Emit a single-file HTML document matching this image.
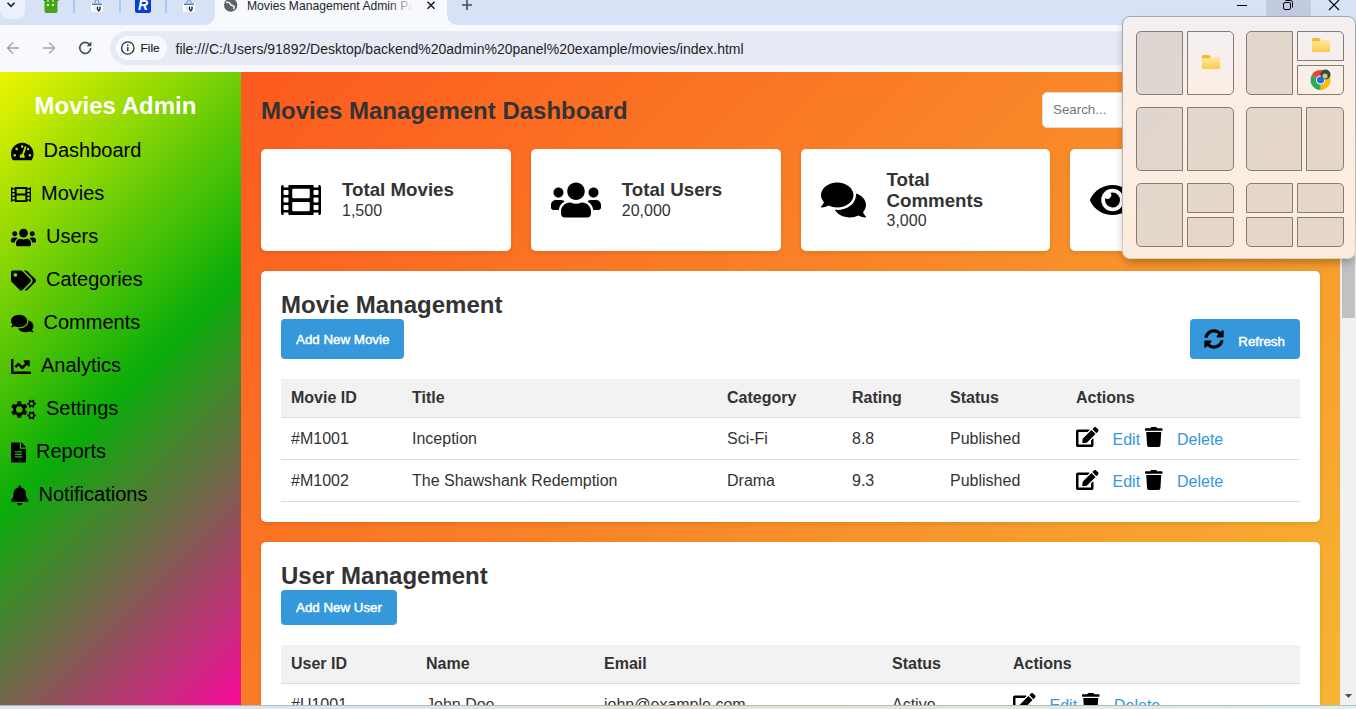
<!DOCTYPE html>
<html lang="en"><head><meta charset="utf-8"><title>Movies Management Admin Panel</title>
<style>
*{box-sizing:border-box;margin:0;padding:0}
html,body{width:1356px;height:709px;overflow:hidden;background:#f9f9ff;font-family:"Liberation Sans",Arial,sans-serif;color:#333}
.ic{fill:currentColor;display:inline-block;vertical-align:middle;flex:none}
#chrome{position:absolute;left:0;top:0;width:1356px;height:72px;background:#f8f9ff;z-index:5}
#tabstrip{position:absolute;left:0;top:0;width:1356px;height:25px;background:#d7e2f7}
#tabsearch{position:absolute;left:0;top:-10px;width:25px;height:29px;background:#eaf0fc;border-radius:8px}
#tabgroup{position:absolute;left:25px;top:-10px;width:190px;height:35px;background:#d7e2f7}
#activetab{position:absolute;left:215px;top:-10px;width:232px;height:35px;background:#f8f9ff;border-radius:8px 8px 0 0}
#activetab:before,#activetab:after{content:"";position:absolute;bottom:0;width:10px;height:10px;background:radial-gradient(circle at 0 0,transparent 9.5px,#f8f9ff 10px)}
#activetab:before{left:-10px}
#activetab:after{right:-10px;background:radial-gradient(circle at 100% 0,transparent 9.5px,#f8f9ff 10px)}
.tabtitle{position:absolute;left:247px;top:-2px;width:166px;height:16px;overflow:hidden;white-space:nowrap;font-size:12.15px;color:#1f1f1f;line-height:16px}
.tabtitle:after{content:"";position:absolute;right:0;top:0;width:24px;height:16px;background:linear-gradient(90deg,rgba(248,249,255,0),#f8f9ff)}
#omni{position:absolute;left:110px;top:31px;width:1100px;height:34px;border-radius:17px;background:#e6eaf5}
#filechip{position:absolute;left:116px;top:36px;width:51px;height:24px;border-radius:12px;background:#f8f9ff}
.url{position:absolute;left:175.5px;top:40.5px;font-size:14px;line-height:16px;color:#1f1f1f;white-space:nowrap}
.filetxt{position:absolute;left:140.6px;top:40px;font-size:11.8px;line-height:16px;color:#1f1f1f;-webkit-text-stroke:.2px #1f1f1f}
#page{position:absolute;left:0;top:72px;width:1356px;height:633px;overflow:hidden;background:#f6b532}
#bottom{position:absolute;left:0;top:705px;width:1356px;height:4px;background:linear-gradient(180deg,rgba(60,70,70,.28) 0,rgba(60,70,70,.28) 1px,transparent 1px),linear-gradient(90deg,#dbe5f3 0%,#dde6ee 25%,#e6e4da 50%,#e2e8e2 75%,#e0eeee 100%)}
#side{position:absolute;left:0;top:0;width:241px;height:633px;overflow:hidden}
#side:before{content:"";position:absolute;left:0;top:0;width:250px;height:633px;background:linear-gradient(135deg,#eef600 0%,#09ad09 50%,#ff069f 100%)}
#side h2{position:absolute;left:0;top:20px;width:231px;text-align:center;color:#fff;font-size:24px;line-height:28px;font-weight:bold}
#side ul{position:absolute;left:11px;top:57.3px;list-style:none}
#side li{height:43px;display:flex;align-items:center;font-size:20px;color:#000;white-space:nowrap}
#side li .ic{margin-right:10px;fill:#000}
#main{position:absolute;left:241px;top:0;width:1099px;height:633px;background:linear-gradient(135deg,#fc5a1e,#f6b532)}
h1{position:absolute;left:20px;top:24.6px;font-size:24px;line-height:28px;font-weight:bold;color:#333}
#search{position:absolute;left:801px;top:20px;width:300px;height:36.4px;background:#fff;border:1px solid #ddd;border-radius:5px;font-size:13.33px;line-height:34.4px;padding-left:10px;color:#757575}
#stats{position:absolute;left:20px;top:77px;display:flex;gap:20px}
.stat{width:249.75px;height:102px;flex:none;background:#fff;border-radius:5px;box-shadow:0 2px 5px rgba(0,0,0,.1);display:flex;align-items:center;padding:20px;color:#000}
.stat .ic{margin-right:21px}
.stat h3{font-size:18.72px;line-height:21.5px;font-weight:bold;color:#333;position:relative;top:-.7px}
.stat p{font-size:16px;line-height:18.4px;color:#333}
.card{position:absolute;left:20px;width:1059px;background:#fff;border-radius:5px;box-shadow:0 2px 5px rgba(0,0,0,.1);padding:20px}
.card h2{font-size:24px;line-height:28px;font-weight:bold;color:#333;margin-bottom:0}
.btn{white-space:nowrap;display:inline-flex;align-items:center;background:#3498db;color:#fff;font-size:13.33px;border-radius:4px;height:40px;padding:0 15px;-webkit-text-stroke:.45px #fff}
table{border-collapse:collapse;width:1019px;position:absolute;left:20px}
th{background:#f2f2f2;font-weight:bold;text-align:left}
th,td{padding:0 10px;font-size:16px;color:#333;border-bottom:1px solid #ddd;height:42.2px;white-space:nowrap}
th{height:38.4px}
td a{color:#3498db;position:relative;top:2px}
td .ic{position:relative;top:-1px}
.r1 td{padding-top:1px}
.r1 td .ic{top:-1.5px}
td .ic{fill:#000}
#sb{position:absolute;left:1340px;top:0;width:16px;height:633px;background:#f1f1f1}
#sb .thumb{position:absolute;left:2px;top:17px;width:12.7px;height:228.7px;background:#c1c1c1}
#sb .dn{position:absolute;left:4.7px;top:621.8px;width:7.6px;height:4.3px;background:#505050;clip-path:polygon(0 0,100% 0,50% 100%)}
#snap{position:absolute;left:1124px;top:18px;width:229px;height:240px;border-radius:8px;background:linear-gradient(180deg,#fbf1e8,#fdeadb);box-shadow:0 0 0 1px rgba(120,90,60,.25),0 6px 14px rgba(0,0,0,.22);z-index:10}
#snap i{position:absolute;border:1px solid #8a8079;background:#e9dacb;display:block}
#snap i.l{background:#fbeadb}
.wc{position:absolute;top:0;height:12px}
</style></head><body>
<div id="chrome">
 <div id="tabstrip">
  <div id="tabsearch"></div>
  <div id="activetab"></div>
  <div class="tabtitle">Movies Management Admin Panel</div>
 </div>
 <div id="omni"></div><div id="filechip"></div>
 <div class="filetxt">File</div>
 <div class="url">file:///C:/Users/91892/Desktop/backend%20admin%20panel%20example/movies/index.html</div>
 <svg width="1356" height="72" viewBox="0 0 1356 72" style="position:absolute;left:0;top:0"><path d="M7.5 2.8L11 6.3L14.5 2.8" fill="none" stroke="#1f1f1f" stroke-width="1.6"/><rect x="44.5" y="-4" width="13" height="17" rx="2" fill="#45a516"/><rect x="43.5" y="-3" width="15" height="4" fill="#3f9813"/><rect x="47" y="4" width="2" height="2" fill="#e8f5e0"/><rect x="52" y="4" width="2" height="2" fill="#e8f5e0"/><rect x="47" y="0" width="2" height="2" fill="#9fd48a"/><rect x="52" y="0" width="2" height="2" fill="#9fd48a"/><rect x="73" y="0" width="2" height="13" fill="#a8c7fa"/><rect x="119" y="0" width="2" height="13" fill="#a8c7fa"/><rect x="165" y="0" width="2" height="13" fill="#a8c7fa"/><rect x="91" y="3" width="12" height="8.5" fill="#fff"/><rect x="92" y="3.5" width="10" height="1.5" fill="#2b7de9"/><path d="M94.6 3L96.2 0M99.4 3L97.8 0" fill="none" stroke="#7a7f87" stroke-width="1"/><path d="M97.5 6.5V9.5L98.8 10.8L100 9.5V6.5" fill="none" stroke="#222" stroke-width="1.4"/><rect x="94" y="6.5" width="1.5" height="3.5" fill="#ddd"/><rect x="183" y="3" width="12" height="8.5" fill="#fff"/><rect x="184" y="3.5" width="10" height="1.5" fill="#2b7de9"/><path d="M186.6 3L188.2 0M191.4 3L189.8 0" fill="none" stroke="#7a7f87" stroke-width="1"/><path d="M189.5 6.5V9.5L190.8 10.8L192 9.5V6.5" fill="none" stroke="#222" stroke-width="1.4"/><rect x="186" y="6.5" width="1.5" height="3.5" fill="#ddd"/><rect x="135" y="-4" width="16" height="17" rx="2" fill="#0b3fd1"/><text x="138" y="9.5" font-family="Liberation Sans,Arial,sans-serif" font-weight="bold" font-style="italic" font-size="14" fill="#fff">R</text><circle cx="230.7" cy="5" r="6.7" fill="#5f6368"/><path d="M226 2.5Q229 1.5 230 3.5Q230.5 5.5 233 5.8Q235 6.5 233.5 9" fill="none" stroke="#f8f9ff" stroke-width="1.5"/><path d="M427.5 1.7L434.5 8.7M434.5 1.7L427.5 8.7" stroke="#1f1f1f" stroke-width="1.6"/><path d="M462 5H472M467 0V10" stroke="#444a57" stroke-width="1.5"/><path d="M19 48H8M13 42.5L7.5 48L13 53.5" fill="none" stroke="#a0a3a9" stroke-width="1.4"/><path d="M43 48H54M49 42.5L54.5 48L49 53.5" fill="none" stroke="#a0a3a9" stroke-width="1.4"/><path d="M89.6 44.6A5.5 5.5 0 1 0 90.7 48" fill="none" stroke="#454a54" stroke-width="1.6"/><path d="M91.3 41.6V46.2H86.7Z" fill="#454a54"/><circle cx="127.8" cy="48" r="6.2" fill="none" stroke="#2a2a2a" stroke-width="1.3"/><rect x="127.1" y="47" width="1.4" height="4.3" fill="#2a2a2a"/><rect x="127.1" y="44.5" width="1.4" height="1.5" fill="#2a2a2a"/></svg>
</div>
<div id="page">
 <div id="side"><h2>Movies Admin</h2><ul>
<li><svg class="ic " width="22.5" height="20" viewBox="0 -14 576 512" style=";overflow:visible"><path fill-rule="evenodd" d="M288 32C128.940 32 0 160.940 0 320c0 52.800 14.250 102.260 39.060 144.800 5.610 9.620 16.300 15.200 27.440 15.200h443c11.140 0 21.830-5.580 27.440-15.200C561.750 422.260 576 372.800 576 320c0-159.060-128.940-288-288-288zm0 64c14.710 0 26.580 10.130 30.320 23.650-1.110 2.260-2.640 4.230-3.450 6.670l-9.220 27.670c-5.130 3.490-10.970 6.010-17.640 6.010-17.670 0-32-14.330-32-32S270.330 96 288 96zM96 384c-17.670 0-32-14.330-32-32s14.330-32 32-32 32 14.330 32 32-14.330 32-32 32zm48-160c-17.670 0-32-14.330-32-32s14.330-32 32-32 32 14.330 32 32-14.330 32-32 32zm246.770-72.410l-61.330 184C343.130 347.330 352 364.540 352 384c0 11.720-3.380 22.550-8.880 32H232.880c-5.500-9.450-8.880-20.280-8.880-32 0-33.940 26.500-61.430 59.900-63.590l61.340-184.010c4.170-12.560 17.730-19.450 30.360-15.170 12.570 4.190 19.350 17.790 15.170 30.360zm14.660 57.200l15.520-46.550c3.470-1.290 7.130-2.230 11.050-2.230 17.670 0 32 14.330 32 32s-14.330 32-32 32c-11.380-.010-20.890-6.280-26.570-15.220zM480 384c-17.670 0-32-14.330-32-32s14.330-32 32-32 32 14.330 32 32-14.330 32-32 32z"/></svg><span>Dashboard</span></li>
<li><svg class="ic " width="20" height="20" viewBox="0 -14 512 512" style=";overflow:visible"><path fill-rule="evenodd" d="M488 64h-8v20c0 6.600-5.400 12-12 12h-40c-6.600 0-12-5.400-12-12V64H96v20c0 6.600-5.400 12-12 12H44c-6.600 0-12-5.400-12-12V64h-8C10.700 64 0 74.700 0 88v336c0 13.300 10.700 24 24 24h8v-20c0-6.600 5.400-12 12-12h40c6.600 0 12 5.400 12 12v20h320v-20c0-6.600 5.400-12 12-12h40c6.600 0 12 5.400 12 12v20h8c13.300 0 24-10.700 24-24V88c0-13.300-10.700-24-24-24zM96 372c0 6.600-5.400 12-12 12H44c-6.600 0-12-5.400-12-12v-40c0-6.600 5.400-12 12-12h40c6.600 0 12 5.400 12 12v40zm0-96c0 6.600-5.400 12-12 12H44c-6.600 0-12-5.400-12-12v-40c0-6.600 5.400-12 12-12h40c6.600 0 12 5.400 12 12v40zm0-96c0 6.600-5.400 12-12 12H44c-6.600 0-12-5.400-12-12v-40c0-6.600 5.400-12 12-12h40c6.600 0 12 5.400 12 12v40zm272 208c0 6.600-5.400 12-12 12H156c-6.600 0-12-5.400-12-12v-96c0-6.600 5.400-12 12-12h200c6.600 0 12 5.400 12 12v96zm0-168c0 6.600-5.400 12-12 12H156c-6.600 0-12-5.400-12-12v-96c0-6.600 5.400-12 12-12h200c6.600 0 12 5.400 12 12v96zm112 152c0 6.600-5.400 12-12 12h-40c-6.600 0-12-5.400-12-12v-40c0-6.600 5.400-12 12-12h40c6.600 0 12 5.400 12 12v40zm0-96c0 6.600-5.400 12-12 12h-40c-6.600 0-12-5.400-12-12v-40c0-6.600 5.400-12 12-12h40c6.600 0 12 5.400 12 12v40zm0-96c0 6.600-5.400 12-12 12h-40c-6.600 0-12-5.400-12-12v-40c0-6.600 5.400-12 12-12h40c6.600 0 12 5.400 12 12v40z"/></svg><span>Movies</span></li>
<li><svg class="ic " width="25" height="20" viewBox="0 -14 640 512" style=";overflow:visible"><path fill-rule="evenodd" d="M96 224c35.300 0 64-28.700 64-64s-28.700-64-64-64-64 28.700-64 64 28.700 64 64 64zm448 0c35.300 0 64-28.700 64-64s-28.700-64-64-64-64 28.700-64 64 28.700 64 64 64zm32 32h-64c-17.600 0-33.500 7.100-45.100 18.600 40.300 22.100 68.900 62 75.100 109.400h66c17.700 0 32-14.300 32-32v-32c0-35.300-28.700-64-64-64zm-256 0c61.900 0 112-50.100 112-112S381.900 32 320 32 208 82.100 208 144s50.100 112 112 112zm76.800 32h-8.300c-20.800 10-43.900 16-68.500 16s-47.600-6-68.500-16h-8.300C179.600 288 128 339.600 128 403.200V432c0 26.500 21.500 48 48 48h288c26.500 0 48-21.500 48-48v-28.800c0-63.600-51.600-115.200-115.200-115.200zm-223.700-13.400C161.500 263.100 145.600 256 128 256H64c-35.300 0-64 28.700-64 64v32c0 17.700 14.300 32 32 32h65.900c6.300-47.400 34.900-87.300 75.200-109.400z"/></svg><span>Users</span></li>
<li><svg class="ic " width="25" height="20" viewBox="0 -14 640 512" style=";overflow:visible"><path fill-rule="evenodd" d="M497.941 225.941L286.059 14.059A48 48 0 0 0 252.118 0H48C21.490 0 0 21.490 0 48v204.118a48 48 0 0 0 14.059 33.941l211.882 211.882c18.744 18.745 49.136 18.746 67.882 0l204.118-204.118c18.745-18.745 18.745-49.137 0-67.882zM112 160c-26.510 0-48-21.490-48-48s21.490-48 48-48 48 21.490 48 48-21.490 48-48 48zm513.941 133.823L421.823 497.941c-18.745 18.745-49.137 18.745-67.882 0l-.36-.36L527.640 323.522c16.999-16.999 26.360-39.600 26.360-63.640s-9.362-46.641-26.360-63.640L331.397 0h48.721a48 48 0 0 1 33.941 14.059l211.882 211.882c18.745 18.745 18.745 49.137 0 67.882z"/></svg><span>Categories</span></li>
<li><svg class="ic " width="22.5" height="20" viewBox="0 -14 576 512" style=";overflow:visible"><path fill-rule="evenodd" d="M416 192c0-88.400-93.100-160-208-160S0 103.600 0 192c0 34.300 14.100 65.900 38 92-13.400 30.200-35.500 54.200-35.800 54.500-2.200 2.300-2.800 5.700-1.500 8.700S4.800 352 8 352c36.600 0 66.900-12.300 88.700-25 32.200 15.700 70.300 25 111.300 25 114.900 0 208-71.600 208-160zm122 220c23.900-26 38-57.700 38-92 0-66.900-53.500-124.200-129.300-148.100.9 6.600 1.300 13.300 1.300 20.100 0 105.900-107.700 192-240 192-10.800 0-21.300-.8-31.700-1.900C207.800 439.600 281.800 480 368 480c41 0 79.100-9.200 111.300-25 21.800 12.700 52.100 25 88.700 25 3.200 0 6.100-1.900 7.300-4.800 1.300-2.900.7-6.300-1.500-8.700-.3-.3-22.400-24.200-35.800-54.500z"/></svg><span>Comments</span></li>
<li><svg class="ic " width="20" height="20" viewBox="0 -14 512 512" style=";overflow:visible"><path fill-rule="evenodd" d="M496 384H64V80c0-8.840-7.160-16-16-16H16C7.160 64 0 71.160 0 80v336c0 17.670 14.330 32 32 32h464c8.840 0 16-7.160 16-16v-32c0-8.840-7.160-16-16-16zM464 96H345.940c-21.380 0-32.090 25.850-16.970 40.970l32.400 32.400L288 242.750l-73.370-73.370c-12.500-12.500-32.760-12.500-45.250 0l-68.690 68.690c-6.250 6.250-6.250 16.380 0 22.630l22.620 22.620c6.250 6.250 16.380 6.250 22.630 0L192 237.250l73.370 73.370c12.500 12.500 32.760 12.500 45.250 0l96-96 32.400 32.400c15.120 15.120 40.970 4.410 40.970-16.970V112c.01-8.840-7.150-16-15.990-16z"/></svg><span>Analytics</span></li>
<li><svg class="ic " width="25" height="20" viewBox="0 -14 640 512" style=";overflow:visible"><path fill-rule="evenodd" d="M263.0 104.4L258.9 46.2L165.1 46.2L161.0 104.4L106.2 136.0L53.7 110.5L6.8 191.7L55.2 224.4L55.2 287.6L6.8 320.3L53.7 401.5L106.2 376.0L161.0 407.6L165.1 465.8L258.9 465.8L263.0 407.6L317.8 376.0L370.3 401.5L417.2 320.3L368.8 287.6L368.8 224.4L417.2 191.7L370.3 110.5L317.8 136.0ZM296 256A84 84 0 1 0 128 256A84 84 0 1 0 296 256ZM602.8 131.5L636.3 130.4L636.3 81.6L602.8 80.5L587.0 53.1L602.8 23.6L560.5 -0.9L542.8 27.6L511.2 27.6L493.5 -0.9L451.2 23.6L467.0 53.1L451.2 80.5L417.7 81.6L417.7 130.4L451.2 131.5L467.0 158.9L451.2 188.4L493.5 212.9L511.2 184.4L542.8 184.4L560.5 212.9L602.8 188.4L587.0 158.9ZM569 106A42 42 0 1 0 485 106A42 42 0 1 0 569 106ZM602.8 431.5L636.3 430.4L636.3 381.6L602.8 380.5L587.0 353.1L602.8 323.6L560.5 299.1L542.8 327.6L511.2 327.6L493.5 299.1L451.2 323.6L467.0 353.1L451.2 380.5L417.7 381.6L417.7 430.4L451.2 431.5L467.0 458.9L451.2 488.4L493.5 512.9L511.2 484.4L542.8 484.4L560.5 512.9L602.8 488.4L587.0 458.9ZM569 406A42 42 0 1 0 485 406A42 42 0 1 0 569 406Z"/></svg><span>Settings</span></li>
<li><svg class="ic " width="15" height="20" viewBox="0 -14 384 512" style=";overflow:visible"><path fill-rule="evenodd" d="M224 136V0H24C10.700 0 0 10.700 0 24v464c0 13.300 10.700 24 24 24h336c13.300 0 24-10.700 24-24V160H248c-13.200 0-24-10.800-24-24zm64 236c0 6.600-5.400 12-12 12H108c-6.600 0-12-5.400-12-12v-8c0-6.600 5.400-12 12-12h168c6.600 0 12 5.400 12 12v8zm0-64c0 6.600-5.400 12-12 12H108c-6.600 0-12-5.400-12-12v-8c0-6.600 5.400-12 12-12h168c6.600 0 12 5.400 12 12v8zm0-72v8c0 6.600-5.400 12-12 12H108c-6.600 0-12-5.400-12-12v-8c0-6.600 5.400-12 12-12h168c6.600 0 12 5.400 12 12zm96-114.100v6.100H256V0h6.100c6.400 0 12.500 2.500 17 7l97.900 98c4.500 4.500 7 10.600 7 16.900z"/></svg><span>Reports</span></li>
<li><svg class="ic " width="17.5" height="20" viewBox="0 -14 448 512" style=";overflow:visible"><path fill-rule="evenodd" d="M224 512c35.320 0 63.970-28.650 63.970-64H160.030c0 35.350 28.650 64 63.970 64zm215.390-149.710c-19.320-20.760-55.470-51.990-55.470-154.290 0-77.700-54.480-139.900-127.940-155.160V32c0-17.670-14.320-32-31.980-32s-31.980 14.330-31.980 32v20.840C118.560 68.100 64.080 130.300 64.080 208c0 102.300-36.150 133.530-55.470 154.290-6 6.450-8.660 14.160-8.610 21.710.11 16.400 12.980 32 32.100 32h383.800c19.120 0 32-15.600 32.100-32 .05-7.550-2.610-15.270-8.610-21.710z"/></svg><span>Notifications</span></li>
</ul></div>
 <div id="main">
  <h1>Movies Management Dashboard</h1>
  <div id="search">Search...</div>
  <div id="stats"><div class="stat" ><svg class="ic " width="40" height="40" viewBox="0 0 512 512" style=";overflow:visible"><path fill-rule="evenodd" d="M488 64h-8v20c0 6.600-5.400 12-12 12h-40c-6.600 0-12-5.400-12-12V64H96v20c0 6.600-5.400 12-12 12H44c-6.600 0-12-5.400-12-12V64h-8C10.700 64 0 74.700 0 88v336c0 13.300 10.700 24 24 24h8v-20c0-6.600 5.400-12 12-12h40c6.600 0 12 5.400 12 12v20h320v-20c0-6.600 5.400-12 12-12h40c6.600 0 12 5.400 12 12v20h8c13.300 0 24-10.700 24-24V88c0-13.300-10.700-24-24-24zM96 372c0 6.600-5.400 12-12 12H44c-6.600 0-12-5.400-12-12v-40c0-6.600 5.400-12 12-12h40c6.600 0 12 5.400 12 12v40zm0-96c0 6.600-5.400 12-12 12H44c-6.600 0-12-5.400-12-12v-40c0-6.600 5.400-12 12-12h40c6.600 0 12 5.400 12 12v40zm0-96c0 6.600-5.400 12-12 12H44c-6.600 0-12-5.400-12-12v-40c0-6.600 5.400-12 12-12h40c6.600 0 12 5.400 12 12v40zm272 208c0 6.600-5.400 12-12 12H156c-6.600 0-12-5.400-12-12v-96c0-6.600 5.400-12 12-12h200c6.600 0 12 5.400 12 12v96zm0-168c0 6.600-5.400 12-12 12H156c-6.600 0-12-5.400-12-12v-96c0-6.600 5.400-12 12-12h200c6.600 0 12 5.400 12 12v96zm112 152c0 6.600-5.400 12-12 12h-40c-6.600 0-12-5.400-12-12v-40c0-6.600 5.400-12 12-12h40c6.600 0 12 5.400 12 12v40zm0-96c0 6.600-5.400 12-12 12h-40c-6.600 0-12-5.400-12-12v-40c0-6.600 5.400-12 12-12h40c6.600 0 12 5.400 12 12v40zm0-96c0 6.600-5.400 12-12 12h-40c-6.600 0-12-5.400-12-12v-40c0-6.600 5.400-12 12-12h40c6.600 0 12 5.400 12 12v40z"/></svg><div class="st"><h3>Total Movies</h3><p>1,500</p></div></div><div class="stat" ><svg class="ic " width="50" height="40" viewBox="0 0 640 512" style=";overflow:visible"><path fill-rule="evenodd" d="M96 224c35.300 0 64-28.700 64-64s-28.700-64-64-64-64 28.700-64 64 28.700 64 64 64zm448 0c35.300 0 64-28.700 64-64s-28.700-64-64-64-64 28.700-64 64 28.700 64 64 64zm32 32h-64c-17.600 0-33.500 7.100-45.100 18.600 40.300 22.100 68.900 62 75.100 109.400h66c17.700 0 32-14.300 32-32v-32c0-35.300-28.700-64-64-64zm-256 0c61.900 0 112-50.100 112-112S381.900 32 320 32 208 82.100 208 144s50.100 112 112 112zm76.800 32h-8.300c-20.800 10-43.900 16-68.500 16s-47.600-6-68.500-16h-8.300C179.600 288 128 339.600 128 403.200V432c0 26.500 21.500 48 48 48h288c26.500 0 48-21.500 48-48v-28.800c0-63.600-51.600-115.200-115.200-115.200zm-223.700-13.400C161.500 263.100 145.600 256 128 256H64c-35.300 0-64 28.700-64 64v32c0 17.700 14.300 32 32 32h65.900c6.300-47.400 34.900-87.300 75.200-109.400z"/></svg><div class="st"><h3>Total Users</h3><p>20,000</p></div></div><div class="stat" ><svg class="ic " width="45" height="40" viewBox="0 0 576 512" style=";overflow:visible"><path fill-rule="evenodd" d="M416 192c0-88.400-93.100-160-208-160S0 103.600 0 192c0 34.300 14.100 65.900 38 92-13.400 30.200-35.500 54.200-35.800 54.500-2.200 2.300-2.800 5.700-1.500 8.700S4.800 352 8 352c36.600 0 66.900-12.300 88.700-25 32.200 15.700 70.300 25 111.300 25 114.900 0 208-71.600 208-160zm122 220c23.900-26 38-57.700 38-92 0-66.900-53.500-124.200-129.300-148.100.9 6.600 1.300 13.300 1.300 20.100 0 105.900-107.700 192-240 192-10.800 0-21.300-.8-31.700-1.900C207.800 439.600 281.800 480 368 480c41 0 79.100-9.200 111.300-25 21.800 12.700 52.100 25 88.700 25 3.200 0 6.100-1.900 7.300-4.800 1.300-2.900.7-6.300-1.500-8.700-.3-.3-22.400-24.200-35.800-54.500z"/></svg><div class="st"><h3>Total<br>Comments</h3><p>3,000</p></div></div><div class="stat" ><svg class="ic " width="45" height="40" viewBox="0 0 576 512" style=";overflow:visible"><path fill-rule="evenodd" d="M572.520 241.400C518.290 135.590 410.930 64 288 64S57.680 135.640 3.480 241.410a32.350 32.350 0 0 0 0 29.190C57.710 376.410 165.070 448 288 448s230.320-71.640 284.520-177.410a32.350 32.350 0 0 0 0-29.190zM288 400a144 144 0 1 1 144-144 143.930 143.930 0 0 1-144 144zm0-240a95.310 95.310 0 0 0-25.310 3.790 47.850 47.850 0 0 1-66.900 66.900A95.780 95.780 0 1 0 288 160z"/></svg><div class="st"><h3>Total Views</h3><p>1,200,000</p></div></div></div>
  <div class="card" style="top:199px;height:251px">
   <h2>Movie Management</h2>
   <div class="btn" style="position:absolute;left:20px;top:48px;width:123px">Add New Movie</div>
   <div class="btn" style="position:absolute;left:929px;top:48px;width:110px;padding-left:14.4px"><svg class="ic " width="20" height="20" viewBox="0 0 512 512" style="fill:#000;position:relative;top:-.4px;overflow:visible"><path fill-rule="evenodd" d="M370.720 133.280C339.458 104.008 298.888 87.962 255.848 88c-77.458.068-144.328 53.178-162.791 126.850-1.344 5.363-6.122 9.150-11.651 9.150H24.103c-7.498 0-13.194-6.807-11.807-14.176C33.933 94.924 134.813 8 256 8c66.448 0 126.791 26.136 171.315 68.685L463.030 40.970C478.149 25.851 504 36.559 504 57.941V192c0 13.255-10.745 24-24 24H345.941c-21.382 0-32.090-25.851-16.971-40.971l41.750-41.749zM32 296h134.059c21.382 0 32.090 25.851 16.971 40.971l-41.750 41.750c31.262 29.273 71.835 45.319 114.876 45.280 77.418-.07 144.315-53.144 162.787-126.849 1.344-5.363 6.122-9.150 11.651-9.150h57.304c7.498 0 13.194 6.807 11.807 14.176C478.067 417.076 377.187 504 256 504c-66.448 0-126.791-26.136-171.315-68.685L48.970 471.030C33.851 486.149 8 475.441 8 454.059V320c0-13.255 10.745-24 24-24z"/></svg><span style="margin-left:13.9px;position:relative;top:2.5px">Refresh</span></div>
   <table style="top:108px"><tr><th style="width:121px">Movie ID</th><th style="width:315px">Title</th><th style="width:125px">Category</th><th style="width:98px">Rating</th><th style="width:126px">Status</th><th>Actions</th></tr>
   <tr class="r1"><td>#M1001</td><td>Inception</td><td>Sci-Fi</td><td>8.8</td><td>Published</td><td class="act"><svg class="ic " width="22.5" height="20" viewBox="0 0 576 512" style=";overflow:visible"><path fill-rule="evenodd" d="M402.600 83.200l90.200 90.200c3.800 3.800 3.800 10 0 13.800L274.400 405.600l-92.800 10.300c-12.400 1.400-22.900-9.100-21.500-21.500l10.300-92.800L388.800 83.200c3.800-3.800 10-3.800 13.800 0zm162-22.900l-48.800-48.800c-15.200-15.200-39.900-15.200-55.200 0l-35.400 35.400c-3.800 3.800-3.800 10 0 13.800l90.200 90.200c3.800 3.800 10 3.800 13.800 0l35.400-35.400c15.200-15.300 15.200-40 0-55.200zM384 346.200V448H64V128h229.800c3.200 0 6.200-1.300 8.500-3.500l40-40c7.600-7.600 2.200-20.500-8.500-20.500H48C21.500 64 0 85.500 0 112v352c0 26.500 21.500 48 48 48h352c26.500 0 48-21.500 48-48V306.200c0-10.700-12.900-16-20.500-8.500l-40 40c-2.200 2.300-3.500 5.300-3.500 8.500z"/></svg><a style="margin-left:14px">Edit</a><svg class="ic " width="17.5" height="20" viewBox="0 0 448 512" style="margin-left:5px;overflow:visible"><path fill-rule="evenodd" d="M432 32H312l-9.400-18.700A24 24 0 0 0 281.100 0H166.800a23.720 23.720 0 0 0-21.400 13.300L136 32H16A16 16 0 0 0 0 48v32a16 16 0 0 0 16 16h416a16 16 0 0 0 16-16V48a16 16 0 0 0-16-16zM53.200 467a48 48 0 0 0 47.900 45h245.800a48 48 0 0 0 47.900-45L416 128H32z"/></svg><a style="margin-left:14.4px">Delete</a></td></tr>
   <tr><td>#M1002</td><td>The Shawshank Redemption</td><td>Drama</td><td>9.3</td><td>Published</td><td class="act"><svg class="ic " width="22.5" height="20" viewBox="0 0 576 512" style=";overflow:visible"><path fill-rule="evenodd" d="M402.600 83.200l90.200 90.200c3.800 3.800 3.800 10 0 13.800L274.400 405.600l-92.800 10.300c-12.400 1.400-22.900-9.100-21.500-21.500l10.300-92.800L388.800 83.200c3.800-3.800 10-3.800 13.800 0zm162-22.900l-48.800-48.800c-15.200-15.200-39.900-15.200-55.200 0l-35.400 35.400c-3.800 3.800-3.800 10 0 13.800l90.200 90.200c3.800 3.800 10 3.800 13.800 0l35.400-35.400c15.200-15.300 15.200-40 0-55.200zM384 346.200V448H64V128h229.800c3.200 0 6.200-1.300 8.500-3.500l40-40c7.600-7.600 2.200-20.500-8.500-20.500H48C21.500 64 0 85.500 0 112v352c0 26.500 21.500 48 48 48h352c26.500 0 48-21.500 48-48V306.200c0-10.700-12.900-16-20.500-8.500l-40 40c-2.200 2.300-3.500 5.300-3.500 8.500z"/></svg><a style="margin-left:14px">Edit</a><svg class="ic " width="17.5" height="20" viewBox="0 0 448 512" style="margin-left:5px;overflow:visible"><path fill-rule="evenodd" d="M432 32H312l-9.400-18.700A24 24 0 0 0 281.100 0H166.800a23.720 23.720 0 0 0-21.400 13.300L136 32H16A16 16 0 0 0 0 48v32a16 16 0 0 0 16 16h416a16 16 0 0 0 16-16V48a16 16 0 0 0-16-16zM53.200 467a48 48 0 0 0 47.900 45h245.800a48 48 0 0 0 47.900-45L416 128H32z"/></svg><a style="margin-left:14.4px">Delete</a></td></tr></table>
  </div>
  <div class="card" style="top:470px;height:260px">
   <h2>User Management</h2>
   <div class="btn" style="position:absolute;left:20px;top:48px;width:116px;height:35px">Add New User</div>
   <table style="top:102.8px"><tr><th style="width:135px">User ID</th><th style="width:178px">Name</th><th style="width:288px">Email</th><th style="width:121px">Status</th><th>Actions</th></tr>
   <tr class="r1"><td>#U1001</td><td>John Doe</td><td>john@example.com</td><td>Active</td><td class="act"><svg class="ic " width="22.5" height="20" viewBox="0 0 576 512" style=";overflow:visible"><path fill-rule="evenodd" d="M402.600 83.200l90.200 90.200c3.800 3.800 3.800 10 0 13.800L274.400 405.600l-92.800 10.300c-12.400 1.400-22.900-9.100-21.500-21.500l10.300-92.800L388.800 83.200c3.800-3.800 10-3.800 13.800 0zm162-22.900l-48.800-48.800c-15.200-15.200-39.900-15.200-55.200 0l-35.400 35.400c-3.800 3.800-3.800 10 0 13.800l90.200 90.200c3.800 3.800 10 3.800 13.800 0l35.400-35.400c15.200-15.300 15.200-40 0-55.200zM384 346.200V448H64V128h229.800c3.200 0 6.200-1.300 8.500-3.500l40-40c7.600-7.600 2.200-20.500-8.500-20.500H48C21.500 64 0 85.500 0 112v352c0 26.500 21.500 48 48 48h352c26.500 0 48-21.500 48-48V306.200c0-10.700-12.900-16-20.500-8.500l-40 40c-2.200 2.300-3.500 5.300-3.500 8.500z"/></svg><a style="margin-left:14px">Edit</a><svg class="ic " width="17.5" height="20" viewBox="0 0 448 512" style="margin-left:5px;overflow:visible"><path fill-rule="evenodd" d="M432 32H312l-9.400-18.700A24 24 0 0 0 281.100 0H166.800a23.720 23.720 0 0 0-21.400 13.300L136 32H16A16 16 0 0 0 0 48v32a16 16 0 0 0 16 16h416a16 16 0 0 0 16-16V48a16 16 0 0 0-16-16zM53.200 467a48 48 0 0 0 47.900 45h245.800a48 48 0 0 0 47.900-45L416 128H32z"/></svg><a style="margin-left:14.4px">Delete</a></td></tr></table>
  </div>
 </div>
 <div id="sb"><div class="thumb"></div><div class="dn"></div></div>
</div>
<div id="bottom"></div>
<svg id="snapsvg" width="1356" height="280" viewBox="0 0 1356 280" style="position:absolute;left:0;top:0;z-index:10;pointer-events:none"><defs>
<linearGradient id="pg" x1="0" y1="0" x2="0" y2="1"><stop offset="0" stop-color="#f2eff3"/><stop offset=".12" stop-color="#f6efee"/><stop offset=".3" stop-color="#fbeee4"/><stop offset="1" stop-color="#fcecdd"/></linearGradient>
<linearGradient id="bd" x1="0" y1="0" x2="0" y2="1"><stop offset="0" stop-color="#a5a5ad"/><stop offset=".5" stop-color="#b8afab"/><stop offset=".85" stop-color="#c9bbb0"/><stop offset="1" stop-color="#e0cfc0"/></linearGradient>
<linearGradient id="fg" x1="0" y1="0" x2="0" y2="1"><stop offset="0" stop-color="#ffe9a0"/><stop offset="1" stop-color="#fbcb4c"/></linearGradient>
<linearGradient id="dk" gradientUnits="userSpaceOnUse" x1="1136" y1="31" x2="1300" y2="200"><stop offset="0" stop-color="#dcd5d2"/><stop offset=".6" stop-color="#e3d7cb"/><stop offset="1" stop-color="#e5d7c8"/></linearGradient>
<filter id="sh" filterUnits="userSpaceOnUse" x="1090" y="0" width="280" height="280"><feGaussianBlur stdDeviation="5"/></filter>
</defs><rect x="1266" y="0" width="45" height="17" fill="#c3cbe0"/><path d="M1237 5.5H1247" stroke="#000" stroke-width="1"/><rect x="1283.5" y="2.5" width="7" height="7" rx="1.5" fill="none" stroke="#000" stroke-width="1"/><path d="M1285.5 0.5H1290.5Q1292.5 0.5 1292.5 2.5V7.5" fill="none" stroke="#000" stroke-width="1"/><path d="M1329 0L1339 10M1339 0L1329 10" stroke="#000" stroke-width="1.1"/><rect x="1124" y="24" width="230" height="238" rx="8" fill="rgba(0,0,0,.3)" filter="url(#sh)"/><rect x="1122.5" y="16.5" width="233" height="242" rx="7.5" fill="url(#pg)" stroke="url(#bd)" stroke-width="1"/><g fill="url(#dk)" stroke="#857c75" stroke-width="1"><path d="M1141.0 31.5H1182.5V94.5H1141.0A4.5 4.5 0 0 1 1136.5 90.0V36.0A4.5 4.5 0 0 1 1141.0 31.5Z"/><path d="M1251.0 31.5H1292.5V94.5H1251.0A4.5 4.5 0 0 1 1246.5 90.0V36.0A4.5 4.5 0 0 1 1251.0 31.5Z"/><path d="M1141.0 107.5H1182.5V170.5H1141.0A4.5 4.5 0 0 1 1136.5 166.0V112.0A4.5 4.5 0 0 1 1141.0 107.5Z"/><path d="M1187.5 107.5H1229.0A4.5 4.5 0 0 1 1233.5 112.0V166.0A4.5 4.5 0 0 1 1229.0 170.5H1187.5V107.5Z"/><path d="M1251.0 107.5H1301.5V170.5H1251.0A4.5 4.5 0 0 1 1246.5 166.0V112.0A4.5 4.5 0 0 1 1251.0 107.5Z"/><path d="M1306.5 107.5H1339.0A4.5 4.5 0 0 1 1343.5 112.0V166.0A4.5 4.5 0 0 1 1339.0 170.5H1306.5V107.5Z"/><path d="M1141.0 183.5H1182.5V246.5H1141.0A4.5 4.5 0 0 1 1136.5 242.0V188.0A4.5 4.5 0 0 1 1141.0 183.5Z"/><path d="M1187.5 183.5H1229.0A4.5 4.5 0 0 1 1233.5 188.0V212.5H1187.5V183.5Z"/><path d="M1187.5 217.5H1233.5V242.0A4.5 4.5 0 0 1 1229.0 246.5H1187.5V217.5Z"/><path d="M1251.0 183.5H1292.5V212.5H1246.5V188.0A4.5 4.5 0 0 1 1251.0 183.5Z"/><path d="M1297.5 183.5H1339.0A4.5 4.5 0 0 1 1343.5 188.0V212.5H1297.5V183.5Z"/><path d="M1246.5 217.5H1292.5V246.5H1251.0A4.5 4.5 0 0 1 1246.5 242.0V217.5Z"/><path d="M1297.5 217.5H1343.5V242.0A4.5 4.5 0 0 1 1339.0 246.5H1297.5V217.5Z"/></g><g fill="rgba(255,252,248,.06)" stroke="#857c75" stroke-width="1"><path d="M1187.5 31.5H1229.0A4.5 4.5 0 0 1 1233.5 36.0V90.0A4.5 4.5 0 0 1 1229.0 94.5H1187.5V31.5Z"/><path d="M1297.5 31.5H1339.0A4.5 4.5 0 0 1 1343.5 36.0V60.5H1297.5V31.5Z"/><path d="M1297.5 65.5H1343.5V90.0A4.5 4.5 0 0 1 1339.0 94.5H1297.5V65.5Z"/></g><g transform="translate(1202 55) scale(1)"><path d="M0 1.6Q0 0 1.6 0H6.2Q7 0 7.6 .6L9 2H16.4Q18 2 18 3.6V12.4Q18 14 16.4 14H1.6Q0 14 0 12.4Z" fill="#f5b82e"/><path d="M0 4.6Q0 3.2 1.4 3.2H7.2L9 2H16.6Q18 2 18 3.4V12.6Q18 14 16.6 14H1.4Q0 14 0 12.6Z" fill="url(#fg)"/></g><g transform="translate(1312 38) scale(1)"><path d="M0 1.6Q0 0 1.6 0H6.2Q7 0 7.6 .6L9 2H16.4Q18 2 18 3.6V12.4Q18 14 16.4 14H1.6Q0 14 0 12.4Z" fill="#f5b82e"/><path d="M0 4.6Q0 3.2 1.4 3.2H7.2L9 2H16.6Q18 2 18 3.4V12.6Q18 14 16.6 14H1.4Q0 14 0 12.6Z" fill="url(#fg)"/></g><path d="M1320.5 80L1311.84 75.00A10 10 0 0 1 1329.16 75.00Z" fill="#ea4335"/><path d="M1320.5 80L1329.16 75.00A10 10 0 0 1 1320.50 90.00Z" fill="#fbbc04"/><path d="M1320.5 80L1320.50 90.00A10 10 0 0 1 1311.84 75.00Z" fill="#34a853"/><circle cx="1320.5" cy="80" r="4.60" fill="#fff"/><circle cx="1320.5" cy="80" r="3.60" fill="#1a73e8"/><circle cx="1325.5" cy="74.5" r="5" fill="#3a4a2c"/><circle cx="1325" cy="76" r="2.6" fill="#b9c9b0"/></svg>
</body></html>
